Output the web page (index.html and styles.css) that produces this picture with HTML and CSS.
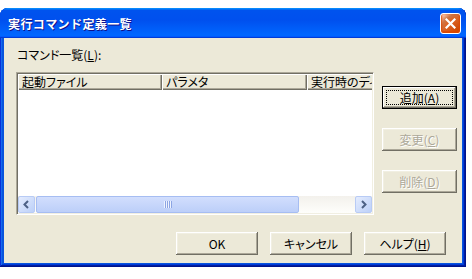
FILE: index.html
```html
<!DOCTYPE html>
<html lang="ja">
<head>
    <meta charset="UTF-8">
    <title>実行コマンド定義一覧</title>
    <link rel="stylesheet" href="styles.css">
</head>
<body>
    <div class="window">
        <div class="titlebar">
            <span class="title">実行コマンド定義一覧</span>
            <button class="close">
                <svg width="11" height="11" viewBox="0 0 11 11">
                    <path d="M1.5 1.5 L9.5 9.5 M9.5 1.5 L1.5 9.5" stroke="#fff" stroke-width="2.2" stroke-linecap="square"/>
                </svg>
            </button>
        </div>
        <div class="client">
            <div class="main">
                <div class="list-area">
                    <div class="label">コマンド一覧(<u>L</u>):</div>
                    <div class="listview">
                        <div class="header">
                            <div class="col col-file">起動ファイル</div>
                            <div class="col col-param">パラメタ</div>
                            <div class="col col-dir">実行時のディレクトリ</div>
                        </div>
                        <div class="rows"></div>
                        <div class="hscroll">
                            <div class="arrow">
                                <svg width="15" height="15" viewBox="0 0 15 15">
                                    <path d="M9 4 L5.5 7.5 L9 11" fill="none" stroke="#4d6185" stroke-width="2"/>
                                </svg>
                            </div>
                            <div class="track">
                                <div class="thumb"><span class="grip"></span></div>
                            </div>
                            <div class="arrow">
                                <svg width="15" height="15" viewBox="0 0 15 15">
                                    <path d="M6 4 L9.5 7.5 L6 11" fill="none" stroke="#4d6185" stroke-width="2"/>
                                </svg>
                            </div>
                        </div>
                    </div>
                </div>
                <div class="side">
                    <button class="btn default"><span class="focus">追加(<u>A</u>)</span></button>
                    <button class="btn" disabled>変更(<u>C</u>)</button>
                    <button class="btn" disabled>削除(<u>D</u>)</button>
                </div>
            </div>
            <div class="footer">
                <button class="btn wide">OK</button>
                <button class="btn wide">キャンセル</button>
                <button class="btn wide">ヘルプ(<u>H</u>)</button>
            </div>
        </div>
    </div>
</body>
</html>
```

FILE: styles.css
```css
body {
    margin: 0;
    background: #fff;
    font-family: "Noto Sans CJK JP", "Liberation Sans", sans-serif;
    font-size: 12px;
    font-feature-settings: "palt";
}
.window {
    margin-top: 8px;
    width: 466px;
    height: 259px;
    box-sizing: border-box;
    padding: 0 4px 4px;
    background: #0855dd;
    border-radius: 8px 8px 0 0;
    box-shadow: inset -1px -1px #00138c, inset 1px 1px #0831d9,
        inset -2px -2px #001ea0, inset 2px 2px #166aee,
        inset -3px -3px #003bda, inset 3px 3px #0855dd;
    display: flex;
    flex-direction: column;
}
.titlebar {
    height: 30px;
    margin: 0 -4px;
    padding: 0 5px 0 8px;
    display: flex;
    align-items: center;
    justify-content: space-between;
    border-radius: 8px 8px 0 0;
    background: linear-gradient(180deg, #0997ff, #0053ee 8%, #0050ee 40%, #06f 88%, #06f 93%, #005bff 95%, #003dd7 96%, #003dd7);
}
.title {
    color: #fff;
    font-weight: bold;
    font-size: 12px;
    letter-spacing: 0.4px;
    text-shadow: 1px 1px #0f1089;
    font-feature-settings: normal;
}
.close {
    width: 21px;
    height: 21px;
    padding: 0;
    border: 1px solid #fff;
    border-radius: 3px;
    background: radial-gradient(circle at 90% 90%, #cc4600 0%, #dc6527 55%, #cd7546 70%, #ffccb2 90%, #fff 100%);
    box-shadow: inset 0 -1px 2px 1px #da4600;
    display: flex;
    align-items: center;
    justify-content: center;
}
.client {
    flex: 1;
    background: #ece9d8;
    padding: 10px 0 0 12px;
}
.main {
    display: flex;
}
.list-area {
    width: 358px;
}
.label {
    height: 24px;
    line-height: 14px;
    padding-left: 1px;
}
.listview {
    height: 143px;
    box-sizing: border-box;
    border: 1px solid;
    border-color: #aca899 #fff #fff #aca899;
    box-shadow: inset 1px 1px #716f64, inset -1px -1px #f1efe2;
    padding: 1px;
    background: #fff;
    display: flex;
    flex-direction: column;
}
.header {
    display: flex;
    height: 16px;
    overflow: hidden;
    flex-shrink: 0;
}
.col {
    height: 16px;
    line-height: 15px;
    box-sizing: border-box;
    padding-left: 4px;
    background: #ece9d8;
    white-space: nowrap;
    overflow: hidden;
    box-shadow: inset 1px 1px #fff, inset -1px -1px #716f64, inset -2px -2px #aca899;
}
.col-file {
    width: 144px;
    flex-shrink: 0;
}
.col-param {
    width: 145px;
    flex-shrink: 0;
}
.col-dir {
    flex: 1;
    box-shadow: inset 1px 1px #fff, inset 0 -1px #716f64, inset 0 -2px #aca899;
}
.rows {
    flex: 1;
}
.hscroll {
    height: 17px;
    display: flex;
    background: linear-gradient(#f3f1ec, #fefefb);
}
.arrow {
    width: 17px;
    height: 17px;
    box-sizing: border-box;
    border: 1px solid #b8cbf5;
    border-radius: 2px;
    background: linear-gradient(135deg, #e4ecfe, #bcd0f8);
    display: flex;
    align-items: center;
    justify-content: center;
}
.track {
    flex: 1;
    padding-left: 1px;
}
.thumb {
    width: 263px;
    height: 17px;
    box-sizing: border-box;
    border: 1px solid #a6bdf2;
    border-radius: 2px;
    background: linear-gradient(#d2defd, #bccff9);
    display: flex;
    align-items: center;
    justify-content: center;
}
.grip {
    width: 8px;
    height: 7px;
    background: repeating-linear-gradient(90deg, #eef3fe 0 1px, #8ca5e4 1px 2px);
}
.side {
    margin-left: 8px;
    padding-top: 38px;
    display: flex;
    flex-direction: column;
    gap: 19px;
}
.btn {
    width: 75px;
    height: 23px;
    padding: 0;
    border: none;
    background: #ece9d8;
    color: #000;
    font-family: inherit;
    font-size: 12px;
    font-feature-settings: "palt";
    box-shadow: inset -1px -1px #716f64, inset 1px 1px #fff,
        inset -2px -2px #aca899, inset 2px 2px #f1efe2;
}
.btn:disabled {
    color: #aca899;
    text-shadow: 1px 1px #fff;
}
.default {
    box-shadow: inset 0 0 0 1px #000, inset -2px -2px #716f64,
        inset 2px 2px #fff, inset -3px -3px #aca899;
    padding: 4px;
}
.focus {
    display: block;
    height: 15px;
    line-height: 13px;
    border: 1px dotted #000;
    box-sizing: border-box;
}
.footer {
    margin-top: 17px;
    padding-left: 160px;
    display: flex;
    gap: 12px;
}
.wide {
    width: 82px;
}
```
